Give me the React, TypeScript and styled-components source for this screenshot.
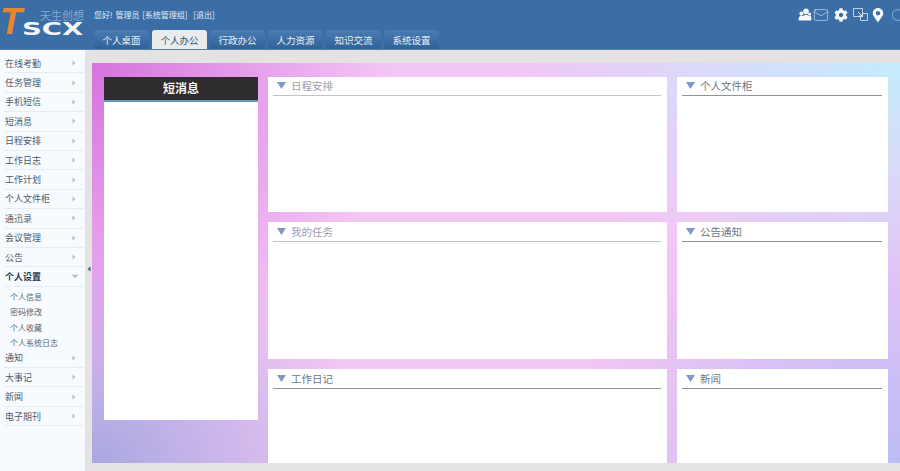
import styled, { createGlobalStyle } from 'styled-components'
import { FaCog, FaMapMarkerAlt, FaCaretRight, FaCaretDown, FaCaretLeft } from 'react-icons/fa'
import { Mail, Cloud } from 'lucide-react'

const GlobalStyle = createGlobalStyle`
  html, body {
    margin: 0;
    padding: 0;
    width: 900px;
    height: 471px;
    overflow: hidden;
    background: #e5e2e3;
    font-family: "Noto Sans CJK SC", "Liberation Sans", sans-serif;
  }
`

const tabs = ['个人桌面', '个人办公', '行政办公', '人力资源', '知识交流', '系统设置']
const menuTop = ['在线考勤', '任务管理', '手机短信', '短消息', '日程安排', '工作日志', '工作计划', '个人文件柜', '通迅录', '会议管理', '公告']
const subMenu = ['个人信息', '密码修改', '个人收藏', '个人系统日志']
const menuBottom = ['通知', '大事记', '新闻', '电子期刊']

const UsersIcon = () => (
  <svg width="14" height="14" viewBox="0 0 14 14" fill="#f4f8fc">
    <circle cx="3.4" cy="5.4" r="2" />
    <circle cx="8" cy="3.2" r="2.8" />
    <circle cx="11.6" cy="6" r="1.6" />
    <path d="M0.5 12.5c0-3 1-5 2.6-5 1 0 1.4.3 1.8.8.6-.8 1.6-1.6 3-1.6 1.3 0 2.3.5 3 1.3.3-.3.7-.4 1.1-.4.8 0 1.5 1.5 1.5 4.2 0 .5-.5.7-1 .7H1.3c-.5 0-.8-.3-.8-.7z" />
  </svg>
)

const ScreensIcon = () => (
  <svg width="15" height="15" viewBox="0 0 15 15" fill="none" stroke="#b9d0e8" strokeWidth="1">
    <rect x="0.5" y="1.5" width="9" height="8" />
    <path d="M9.5 6.5h5v7h-7v-4" />
    <path d="M5 5l4 4M9.5 5.5V9H6" stroke="#e6eff8" />
  </svg>
)

const PanelCaret = () => (
  <svg width="9" height="7" viewBox="0 0 9 7">
    <polygon points="0,0 9,0 4.5,7" fill="#7f98c8" />
  </svg>
)

const MenuRow = ({ label }: { label: string }) => (
  <MenuItem>
    <span>{label}</span>
    <FaCaretRight size={8} color="#b9bec4" />
  </MenuItem>
)

const Panel = ({ title, area, faded, tall }: { title: string; area: string; faded?: boolean; tall?: boolean }) => (
  <PanelBox $area={area}>
    <PanelHead $faded={faded} $tall={tall}>
      <PanelCaret />
      <span>{title}</span>
    </PanelHead>
  </PanelBox>
)

const App = () => (
  <Page>
    <GlobalStyle />
    <Header>
      <Logo>
        <LogoT>T</LogoT>
        <LogoRest>
          <Motto>天生创想</Motto>
          <LogoWord>SCX</LogoWord>
        </LogoRest>
      </Logo>
      <HeaderMain>
        <TopLine>
          <Greeting>您好! 管理员 [系统管理组]{'\u00a0\u00a0'}[退出]</Greeting>
          <Icons>
            <UsersIcon />
            <Mail size={16} color="#d7e5f4" strokeWidth={1} />
            <FaCog size={14} color="#f4f8fc" />
            <ScreensIcon />
            <FaMapMarkerAlt size={14} color="#f4f8fc" />
            <Cloud size={18} color="#a9c3de" strokeWidth={1} />
          </Icons>
        </TopLine>
        <Tabs>
          {tabs.map((tab, i) => (
            <Tab key={tab} $active={i === 1}>{tab}</Tab>
          ))}
        </Tabs>
      </HeaderMain>
    </Header>
    <Body>
      <Sidebar>
        {menuTop.map((m) => (
          <MenuRow key={m} label={m} />
        ))}
        <MenuItem $open>
          <span>个人设置</span>
          <FaCaretDown size={10} color="#b9bec4" />
        </MenuItem>
        <SubList>
          {subMenu.map((s) => (
            <SubItem key={s}>{s}</SubItem>
          ))}
        </SubList>
        {menuBottom.map((m) => (
          <MenuRow key={m} label={m} />
        ))}
      </Sidebar>
      <Gutter>
        <Collapse>
          <FaCaretLeft size={8} color="#556070" />
        </Collapse>
      </Gutter>
      <Canvas>
        <MessageBox>
          <MessageHead>短消息</MessageHead>
        </MessageBox>
        <Panel title="日程安排" area="a" faded />
        <Panel title="个人文件柜" area="b" />
        <Panel title="我的任务" area="c" faded tall />
        <Panel title="公告通知" area="d" tall />
        <Panel title="工作日记" area="e" tall />
        <Panel title="新闻" area="f" tall />
      </Canvas>
    </Body>
  </Page>
)

export default App

const Page = styled.div`
  width: 900px;
  height: 471px;
  display: flex;
  flex-direction: column;
  overflow: hidden;
`

const Header = styled.header`
  height: 50px;
  flex: none;
  display: flex;
  background: #3b6da6;
  border-bottom: 1px solid #5d7f9f;
  box-sizing: border-box;
`

const Logo = styled.div`
  width: 94px;
  flex: none;
  display: flex;
  overflow: hidden;
`

const LogoT = styled.div`
  width: 22px;
  flex: none;
  margin-top: 4px;
  font: italic bold 36px/36px "Liberation Sans", sans-serif;
  color: #e8862e;
`

const LogoRest = styled.div`
  flex: 1;
  min-width: 0;
  display: flex;
  flex-direction: column;
`

const Motto = styled.div`
  margin-top: 9px;
  padding-left: 18px;
  font-size: 11px;
  line-height: 12px;
  color: #86aad0;
  white-space: nowrap;
`

const LogoWord = styled.div`
  font: bold 19px/15px "DejaVu Sans", sans-serif;
  color: #f2f6fa;
  transform: scale(1.45, 0.95);
  transform-origin: left;
  white-space: nowrap;
`

const HeaderMain = styled.div`
  flex: 1;
  min-width: 0;
  display: flex;
  flex-direction: column;
`

const TopLine = styled.div`
  height: 30px;
  display: flex;
  align-items: center;
  justify-content: space-between;
`

const Greeting = styled.div`
  padding-bottom: 1px;
  font-size: 8px;
  word-spacing: 1px;
  color: #e3ecf5;
  white-space: nowrap;
`

const Icons = styled.div`
  display: flex;
  align-items: center;
  margin-right: -9px;
  padding-bottom: 1px;
  & > *:nth-child(2) { margin-left: 1px; }
  & > *:nth-child(3) { margin-left: 5px; }
  & > *:nth-child(4) { margin-left: 5px; }
  & > *:nth-child(5) { margin-left: 3px; }
  & > *:nth-child(6) { margin-left: 6px; }
`

const Tabs = styled.nav`
  display: flex;
  gap: 3px;
`

const Tab = styled.div<{ $active: boolean }>`
  width: 55px;
  height: 19px;
  display: flex;
  align-items: center;
  justify-content: center;
  box-sizing: border-box;
  border-radius: 3px 3px 0 0;
  font-size: 9.5px;
  white-space: nowrap;
  color: ${(p) => (p.$active ? '#37556f' : '#e8f0f7')};
  background: ${(p) => (p.$active ? '#e9ebed' : 'linear-gradient(#4a7cb3, #2f6296)')};
`

const Body = styled.div`
  flex: 1;
  min-height: 0;
  display: flex;
`

const Sidebar = styled.aside`
  width: 85px;
  flex: none;
  box-sizing: border-box;
  padding: 4px 1px 0 4px;
  background: #f7fbff;
`

const MenuItem = styled.div<{ $open?: boolean }>`
  height: 19.4px;
  box-sizing: border-box;
  display: flex;
  align-items: center;
  justify-content: space-between;
  padding: 0 6px 0 1px;
  border-bottom: 1px solid #e6edf2;
  font-size: 9px;
  font-weight: ${(p) => (p.$open ? 700 : 400)};
  color: ${(p) => (p.$open ? '#2c3a48' : '#4f5c68')};
  svg { margin-right: ${(p) => (p.$open ? '-2px' : '0')}; }
`

const SubList = styled.div`
  padding: 2px 0 0 6px;
  margin-bottom: -2px;
`

const SubItem = styled.div`
  height: 15.5px;
  font-size: 8px;
  line-height: 15px;
  color: #5a6570;
  white-space: nowrap;
`

const Gutter = styled.div`
  width: 7px;
  flex: none;
  padding-top: 215px;
  background: #e5e2e3;
`

const Collapse = styled.div`
  display: flex;
  margin-left: 1px;
`

const Canvas = styled.main`
  width: 808px;
  height: 400px;
  margin-top: 13px;
  flex: none;
  box-sizing: border-box;
  padding: 14px 12px 0 12px;
  display: grid;
  grid-template-columns: 154px 399px 211px;
  grid-template-rows: 135px 137px 94px;
  column-gap: 10px;
  row-gap: 10px;
  grid-template-areas:
    'm a b'
    'm c d'
    'm e f';
  background:
    radial-gradient(ellipse 300px 340px at 0% 0%, #d674de, transparent),
    radial-gradient(ellipse 400px 220px at 100% 0%, #c2ecfc, transparent),
    radial-gradient(ellipse 280px 230px at 0% 100%, #a9a8e0, transparent),
    radial-gradient(ellipse 340px 300px at 100% 100%, #bdbcf6, transparent),
    #f3c6f5;
`

const MessageBox = styled.section`
  grid-area: m;
  height: 343px;
  background: #fff;
`

const MessageHead = styled.div`
  height: 25px;
  box-sizing: border-box;
  border-bottom: 2px solid #5f9ac8;
  background: #2e2c2f;
  color: #f5f5f5;
  font-size: 12px;
  font-weight: 700;
  line-height: 21px;
  text-align: center;
`

const PanelBox = styled.section<{ $area: string }>`
  grid-area: ${(p) => p.$area};
  padding: 0 6px 0 5px;
  background: #fff;
`

const PanelHead = styled.div<{ $faded?: boolean; $tall?: boolean }>`
  height: ${(p) => (p.$tall ? '20px' : '19px')};
  display: flex;
  align-items: center;
  gap: 5px;
  box-sizing: border-box;
  padding: 0 0 1px 4px;
  border-bottom: 1px solid ${(p) => (p.$faded ? '#bfc3c6' : '#8d9399')};
  font-size: 10.5px;
  color: ${(p) => (p.$faded ? '#9a9fb0' : '#6d7680')};
`
